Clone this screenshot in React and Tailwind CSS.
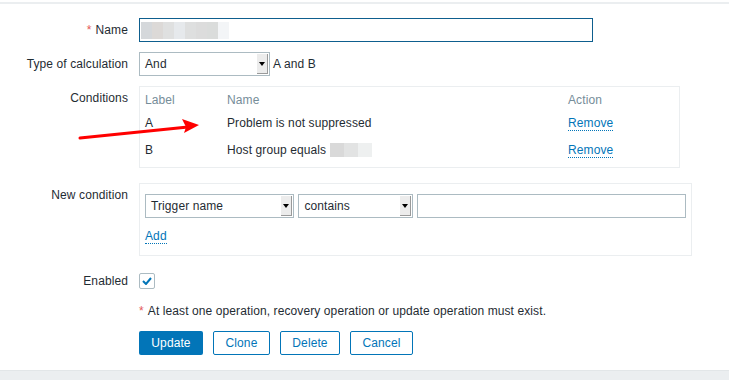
import React from 'react';

const font = { fontFamily: '"Liberation Sans", Arial, sans-serif' };

function Select({ value, width }) {
  return (
    <div
      className={`relative flex h-[24px] items-center border border-[#acbbc2] bg-white pl-[5px] text-[12px] text-[#1f2c33] ${width}`}
    >
      <span>{value}</span>
      <div className="absolute right-[1px] top-[1px] bottom-[1px] flex w-[11px] items-center justify-center border-r border-b border-[#9a9a9a] bg-[#ececec]">
        <div className="h-0 w-0 border-x-[3px] border-t-[4px] border-x-transparent border-t-black" />
      </div>
    </div>
  );
}

function Row({ label, required, top = false, children, className = '' }) {
  return (
    <div className={`flex ${top ? 'items-start' : 'items-center'} ${className}`}>
      <div
        className={`mr-[11px] w-[128px] shrink-0 text-right text-[12px] text-[#1f2c33] ${top ? 'pt-[3px]' : ''}`}
      >
        {required && <span className="mr-[4px] text-[#e45959]">*</span>}
        {label}
      </div>
      {children}
    </div>
  );
}

function LinkDotted({ children }) {
  return (
    <span className="border-b border-dotted border-[#0275b8] text-[12px] leading-[14px] text-[#0275b8]">
      {children}
    </span>
  );
}

const blur = ['#d5d8db', '#dcd9d7', '#dfe0e0', '#e6e9ec', '#dedfdf', '#dcdcdc', '#dadcdb', '#f3f5f7'];

export default function App() {
  return (
    <div className="relative h-[380px] w-[729px] overflow-hidden bg-white tracking-[0.1px]" style={font}>
      <div className="mt-[2px] h-[2px] bg-[#ebeef0]" />

      <Row label="Name" required className="mt-[14px]">
        <div className="flex h-[24px] w-[454px] items-center border border-[#0e5e8e] px-[1px]">
          <div className="flex h-[17px]">
            {blur.map((c, i) => (
              <div key={i} className="h-full w-[11px]" style={{ background: c }} />
            ))}
          </div>
        </div>
      </Row>

      <Row label="Type of calculation" className="mt-[10px]">
        <Select value="And" width="w-[131px]" />
        <span className="ml-[3px] text-[12px] text-[#1f2c33]">A and B</span>
      </Row>

      <Row label="Conditions" top className="mt-[10px]">
        <div className="h-[82px] w-[541px] border border-[#ebeef0] px-[5px] text-[12px]">
          <div className="grid grid-cols-[82px_341px_1fr]">
            <div className="pt-[4px] text-[#768d99]">Label</div>
            <div className="pt-[4px] text-[#768d99]">Name</div>
            <div className="pt-[4px] text-[#768d99]">Action</div>

            <div className="pt-[5px] text-[#1f2c33]">A</div>
            <div className="pt-[5px] text-[#1f2c33]">Problem is not suppressed</div>
            <div className="pt-[5px]">
              <LinkDotted>Remove</LinkDotted>
            </div>

            <div className="pt-[9px] text-[#1f2c33]">B</div>
            <div className="flex items-center pt-[9px] text-[#1f2c33]">
              Host group equals
              <div className="ml-[4px] flex h-[14px]">
                <div className="w-[14px] bg-[#d9d9d9]" />
                <div className="w-[14px] bg-[#e2e3e3]" />
                <div className="w-[14px] bg-[#eef0f0]" />
              </div>
            </div>
            <div className="pt-[9px]">
              <LinkDotted>Remove</LinkDotted>
            </div>
          </div>
        </div>
      </Row>

      <Row label="New condition" top className="mt-[15px]">
        <div className="h-[73px] w-[553px] border border-[#ebeef0] px-[5px] pt-[10px]">
          <div className="flex gap-[4px]">
            <Select value="Trigger name" width="w-[150px]" />
            <Select value="contains" width="w-[115px]" />
            <div className="h-[24px] w-[270px] border border-[#acbbc2] bg-white" />
          </div>
          <div className="mt-[5px]">
            <LinkDotted>Add</LinkDotted>
          </div>
        </div>
      </Row>

      <Row label="Enabled" className="mt-[16px]">
        <div className="flex h-[16px] w-[16px] items-center justify-center rounded-[2px] border border-[#acbbc2] bg-white">
          <svg width="10" height="8" viewBox="0 0 10 8">
            <path d="M1 4 L4 7 L9 1" fill="none" stroke="#0275b8" strokeWidth="2" />
          </svg>
        </div>
      </Row>

      <div className="ml-[139px] mt-[14px] flex h-[14px] items-center text-[12px] text-[#1f2c33]">
        <span className="mr-[4px] text-[#e45959]">*</span>
        At least one operation, recovery operation or update operation must exist.
      </div>

      <div className="ml-[139px] mt-[13px] flex gap-[10px] text-[12px]">
        <button className="h-[24px] w-[64px] rounded-[2px] bg-[#0275b8] text-white">Update</button>
        <button className="h-[24px] w-[57px] rounded-[2px] border border-[#0275b8] text-[#0275b8]">Clone</button>
        <button className="h-[24px] w-[60px] rounded-[2px] border border-[#0275b8] text-[#0275b8]">Delete</button>
        <button className="h-[24px] w-[63px] rounded-[2px] border border-[#0275b8] text-[#0275b8]">Cancel</button>
      </div>

      <div className="mt-[15px] h-[20px] border-t border-[#e2e6e8] bg-[#ebeef0]" />

      <svg className="pointer-events-none absolute left-0 top-0" width="729" height="380">
        <line x1="80" y1="138" x2="188" y2="127" stroke="#ff0000" strokeWidth="3" strokeLinecap="round" />
        <polygon points="199,125 182,119 186,127 184,133" fill="#ff0000" />
      </svg>
    </div>
  );
}
